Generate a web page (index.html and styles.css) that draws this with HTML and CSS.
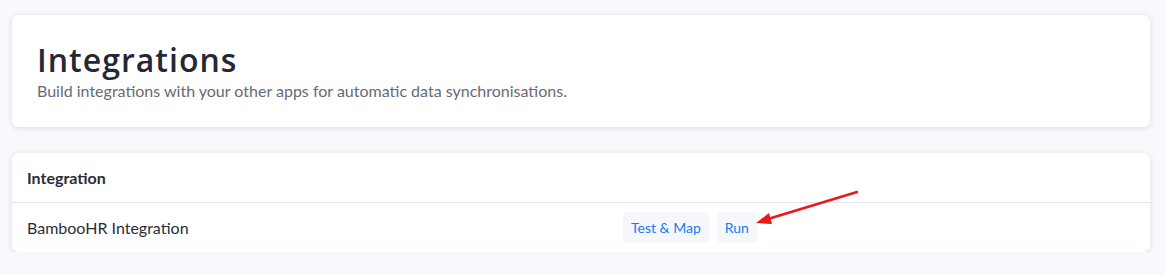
FILE: index.html
```html
<!DOCTYPE html>
<html lang="en">
<head>
    <meta charset="UTF-8">
    <title>Integrations</title>
    <link rel="stylesheet" href="styles.css">
</head>
<body>
    <div class="page">
        <!-- page header -->
        <div class="card header-card">
            <h1>Integrations</h1>
            <p>Build integrations with your other apps for automatic data synchronisations.</p>
        </div>

        <!-- integrations table -->
        <div class="card table-card">
            <div class="table-head">Integration</div>
            <div class="table-row">
                <div class="name">BambooHR Integration</div>
                <div class="actions">
                    <button class="btn">Test &amp; Map</button>
                    <button class="btn">Run</button>
                </div>
            </div>
        </div>
    </div>

    <!-- annotation arrow -->
    <svg class="arrow" width="1166" height="275" viewBox="0 0 1166 275">
        <line x1="857" y1="192" x2="768" y2="219" stroke="#e8191b" stroke-width="2.5" stroke-linecap="round"/>
        <polygon points="756,223 769,213 772,224" fill="#e8191b"/>
    </svg>
</body>
</html>
```

FILE: styles.css
```css
html, body {
    margin: 0;
    padding: 0;
}

body {
    background-color: #f8f9fc;
    font-family: Lato, "Open Sans", sans-serif;
    color: #2b2d36;
    position: relative;
}

.page {
    padding: 15px 16px 0 12px;
    display: flex;
    flex-direction: column;
    gap: 26px;
}

.card {
    background-color: #fff;
    border-radius: 7px;
    box-shadow: 0 1px 6px rgba(30, 35, 60, 0.13);
}

.header-card {
    height: 112px;
    box-sizing: border-box;
    padding: 25px 25px 0 25px;
}

.header-card h1 {
    margin: 0;
    font-family: "Open Sans", sans-serif;
    font-weight: 600;
    font-size: 32px;
    line-height: 40px;
    letter-spacing: 1px;
    color: #262734;
}

.header-card p {
    margin: 0;
    font-size: 16px;
    line-height: 22px;
    color: #666b73;
}

.table-head {
    height: 50px;
    box-sizing: border-box;
    padding: 0 15px;
    display: flex;
    align-items: center;
    font-weight: bold;
    font-size: 16px;
    border-bottom: 1px solid #e3e4e8;
}

.table-row {
    height: 49px;
    box-sizing: border-box;
    padding: 0 15px;
    display: grid;
    grid-template-columns: 596px 1fr;
    align-items: center;
    font-size: 16px;
}

.actions {
    display: flex;
    gap: 8px;
}

.btn {
    font-family: Lato, sans-serif;
    font-size: 14px;
    color: #1a7cf4;
    background-color: #f5f7fa;
    border: none;
    border-radius: 4px;
    height: 31px;
    padding: 0 8px;
    cursor: pointer;
}

.arrow {
    position: absolute;
    top: 0;
    left: 0;
    pointer-events: none;
}
```
